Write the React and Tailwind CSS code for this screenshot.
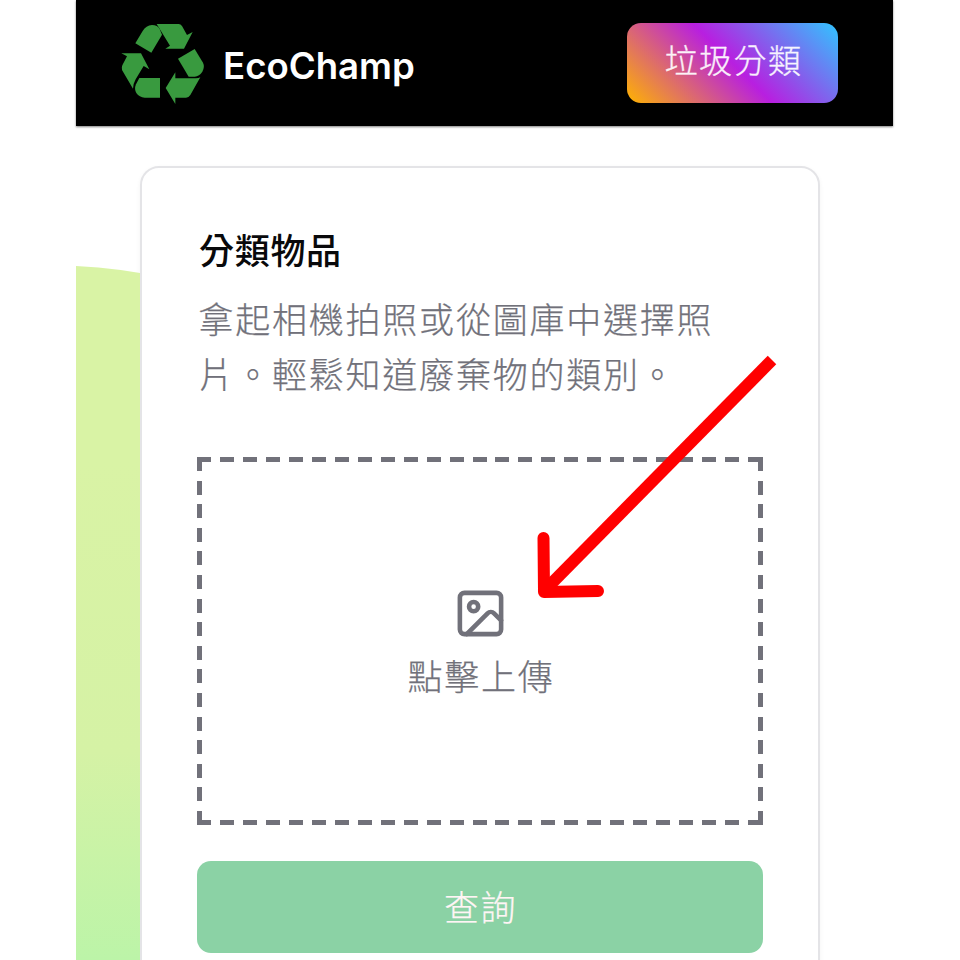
import React from 'react';

const CJK = "font-['Noto_Sans_CJK_TC',sans-serif]";

function RecycleLogo() {
  return (
    <svg className="h-[100px] w-[105px] shrink-0" viewBox="0 0 315 300" fill="#399a3f">
      <path d="M76 88 98 51Q108 34 126 33Q143 33 149 45L156 62 124 116Z" />
      <path d="M140 30H206Q212 30 216 36L231 63 248 54 222 104H166L180 95Z" />
      <path d="M204 134 254 105 279 146Q285 158 277 173Q268 187 254 188H236Z" />
      <path d="M271 190 241 243Q236 251 228 251H196V270L167 222 196 175V193H258Q266 193 271 190Z" />
      <path d="M150 192V251H104Q88 250 79 237Q72 225 78 211L88 192Z" />
      <path d="M34 118H93L118 166 101 156 77 196Q70 208 69 224L36 168Q34 160 37 154L51 127Z" />
    </svg>
  );
}

function Header() {
  return (
    <header className="flex h-[126px] items-start bg-black pl-[34px] pr-[55px] shadow-[0_1px_2px_rgba(0,0,0,0.5)]">
      <div className="flex pt-[14px]">
        <RecycleLogo />
        <span className="ml-[8px] mt-[30px] whitespace-nowrap font-[Inter,sans-serif] text-[36.6px] font-semibold leading-[44px] text-white">
          EcoChamp
        </span>
      </div>
      <button className="ml-auto mt-[23px] flex h-20 w-[211px] items-start justify-center rounded-[14px] bg-[linear-gradient(45deg,#ffb300_0%,#b81fe0_50%,#30c5ff_100%)] pt-[12px] pl-[2px] font-['Noto_Sans_CJK_TC',sans-serif] text-[33px] font-light leading-[48px] tracking-[1.4px] text-white/90 [-webkit-text-stroke:0.3px]">
        垃圾分類
      </button>
    </header>
  );
}

function UploadBox() {
  return (
    <div className="mt-[57px] flex h-[368px] flex-col items-center bg-[image:repeating-linear-gradient(90deg,#71717a_0_14px,transparent_14px_22.96px),repeating-linear-gradient(90deg,#71717a_0_14px,transparent_14px_22.96px),repeating-linear-gradient(180deg,#71717a_0_14px,transparent_14px_23.6px),repeating-linear-gradient(180deg,#71717a_0_14px,transparent_14px_23.6px)] bg-[size:100%_5px,100%_5px,5px_100%,5px_100%] bg-[position:0_0,0_100%,0_0,100%_0] bg-no-repeat pt-[129px] text-[#71717a]">
      <svg className="h-[55px] w-[55px]" viewBox="0 0 24 24" fill="none" stroke="currentColor" strokeWidth="2" strokeLinecap="round" strokeLinejoin="round">
        <rect x="3" y="3" width="18" height="18" rx="2" />
        <circle cx="9" cy="9" r="2" />
        <path d="m21 15-3.086-3.086a2 2 0 0 0-2.828 0L6 21" />
      </svg>
      <span className={`${CJK} mt-[7px] pl-[2px] text-[35px] font-light leading-[54px] tracking-[1.7px] [-webkit-text-stroke:0.25px]`}>點擊上傳</span>
    </div>
  );
}

function PointerArrow() {
  return (
    <svg className="pointer-events-none absolute left-[530px] top-[350px] h-[260px] w-[260px]" viewBox="530 350 260 260" fill="none" stroke="#ff0000" strokeWidth="12">
      <path d="M772 360 548 587" />
      <path d="M543.5 538 544 592 598 591" strokeLinecap="round" strokeLinejoin="round" />
    </svg>
  );
}

export default function App() {
  return (
    <div className="relative h-[960px] w-[960px] overflow-hidden bg-white pl-[76px]">
      <div className="w-[817px]">
        <Header />
        <main className="flex h-[834px] items-start">
          <div className="mt-[140px] h-[694px] w-[64px] shrink-0 bg-[linear-gradient(180deg,#d9f3a5_0%,#d9f3a5_28%,#d5f2a5_70%,#bcf4a8_100%)] [clip-path:polygon(0_0,35%_1.5px,70%_4px,100%_7px,100%_100%,0_100%)]" />
          <section className="mt-[39.5px] h-[860px] w-[680px] shrink-0 rounded-[19px] border-2 border-[#e4e4e7] bg-white px-[55px] pt-[54px] shadow-[0_2px_5px_rgba(0,0,0,0.05)]">
            <h1 className={`${CJK} pl-[2px] text-[35px] font-medium leading-[54px] tracking-[0.7px] text-[#09090b]`}>分類物品</h1>
            <p className={`${CJK} mt-[14px] pl-[1.5px] text-[35px] font-light leading-[55px] tracking-[1.77px] text-[#71717a] [-webkit-text-stroke:0.25px]`}>
              拿起相機拍照或從圖庫中選擇照<br />片。輕鬆知道廢棄物的類別。
            </p>
            <UploadBox />
            <button className={`${CJK} mt-[36.5px] flex h-[92px] w-full items-center justify-center rounded-[14px] bg-[#8bd2a5] pb-[2px] pl-px text-[35px] font-light tracking-[1.6px] text-[#fff5f5] [-webkit-text-stroke:0.25px]`}>
              查詢
            </button>
          </section>
        </main>
      </div>
      <PointerArrow />
    </div>
  );
}
